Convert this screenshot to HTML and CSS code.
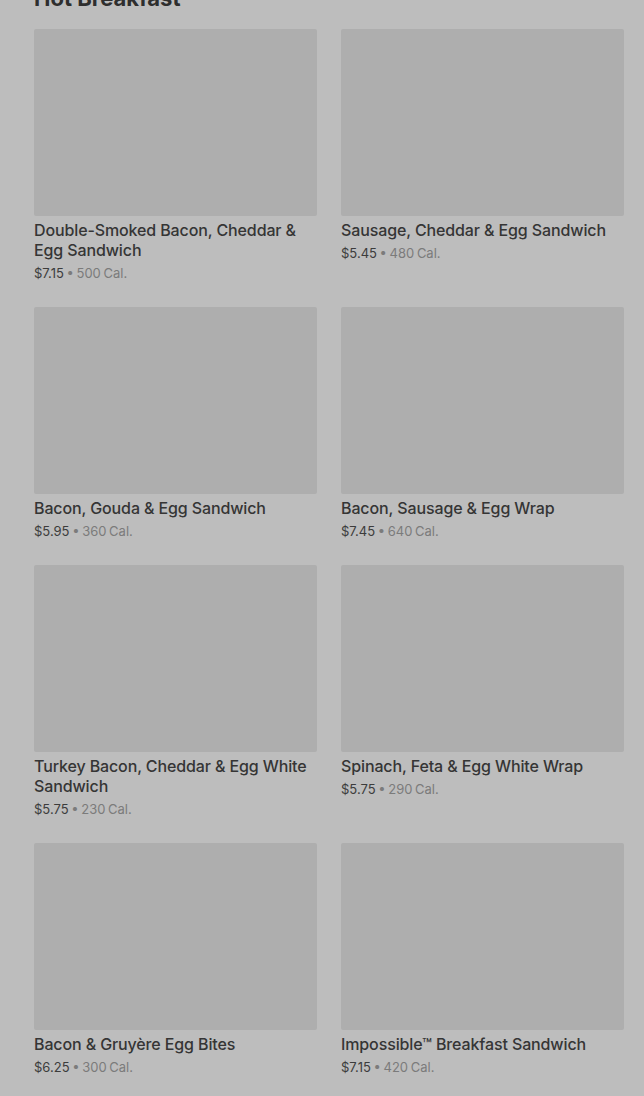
FILE: index.html
```html
<!DOCTYPE html>
<html lang="en">
<head>
<meta charset="utf-8">
<link rel="stylesheet" href="styles.css">
<title>Hot Breakfast</title>
</head>
<body>
<main class="section">
  <h2 class="section-title">Hot Breakfast</h2>
  <div class="grid">
    <div class="card"><div class="thumb"></div><div class="name">Double-Smoked Bacon, Cheddar &amp; Egg Sandwich</div><div class="meta"><span class="price">$7.15</span> <span class="dot">•</span> <span class="cal">500 Cal.</span></div></div>
    <div class="card"><div class="thumb"></div><div class="name">Sausage, Cheddar &amp; Egg Sandwich</div><div class="meta"><span class="price">$5.45</span> <span class="dot">•</span> <span class="cal">480 Cal.</span></div></div>
    <div class="card"><div class="thumb"></div><div class="name">Bacon, Gouda &amp; Egg Sandwich</div><div class="meta"><span class="price">$5.95</span> <span class="dot">•</span> <span class="cal">360 Cal.</span></div></div>
    <div class="card"><div class="thumb"></div><div class="name">Bacon, Sausage &amp; Egg Wrap</div><div class="meta"><span class="price">$7.45</span> <span class="dot">•</span> <span class="cal">640 Cal.</span></div></div>
    <div class="card"><div class="thumb"></div><div class="name">Turkey Bacon, Cheddar &amp; Egg White Sandwich</div><div class="meta"><span class="price">$5.75</span> <span class="dot">•</span> <span class="cal">230 Cal.</span></div></div>
    <div class="card"><div class="thumb"></div><div class="name">Spinach, Feta &amp; Egg White Wrap</div><div class="meta"><span class="price">$5.75</span> <span class="dot">•</span> <span class="cal">290 Cal.</span></div></div>
    <div class="card"><div class="thumb"></div><div class="name">Bacon &amp; Gruyère Egg Bites</div><div class="meta"><span class="price">$6.25</span> <span class="dot">•</span> <span class="cal">300 Cal.</span></div></div>
    <div class="card"><div class="thumb"></div><div class="name">Impossible™ Breakfast Sandwich</div><div class="meta"><span class="price">$7.15</span> <span class="dot">•</span> <span class="cal">420 Cal.</span></div></div>
  </div>
</main>
</body>
</html>
```
FILE: styles.css
```css
html, body {
  margin: 0;
  padding: 0;
  background: #bdbdbd;
  font-family: Inter, "Noto Sans", "Liberation Sans", sans-serif;
  overflow: hidden;
}
.section {
  padding: 0 20px 0 34px;
  margin-top: -18px;
}
.section-title {
  margin: 0 0 15px;
  font-size: 22px;
  line-height: 32px;
  font-weight: 700;
  color: #2e2e2e;
}
.grid {
  display: grid;
  grid-template-columns: 1fr 1fr;
  column-gap: 24px;
  row-gap: 24px;
}
.card {
  display: flex;
  flex-direction: column;
}
.thumb {
  height: 187px;
  background: #aeaeae;
  border-radius: 2px;
}
.name {
  margin-top: 4px;
  font-size: 16px;
  line-height: 20px;
  font-weight: 500;
  letter-spacing: -0.12px;
  color: #353535;
}
.meta {
  margin-top: 3px;
  font-size: 13px;
  line-height: 20px;
  color: #3c3c3c;
  word-spacing: -1px;
}
.dot, .cal {
  color: #7b7b7b;
}
```
